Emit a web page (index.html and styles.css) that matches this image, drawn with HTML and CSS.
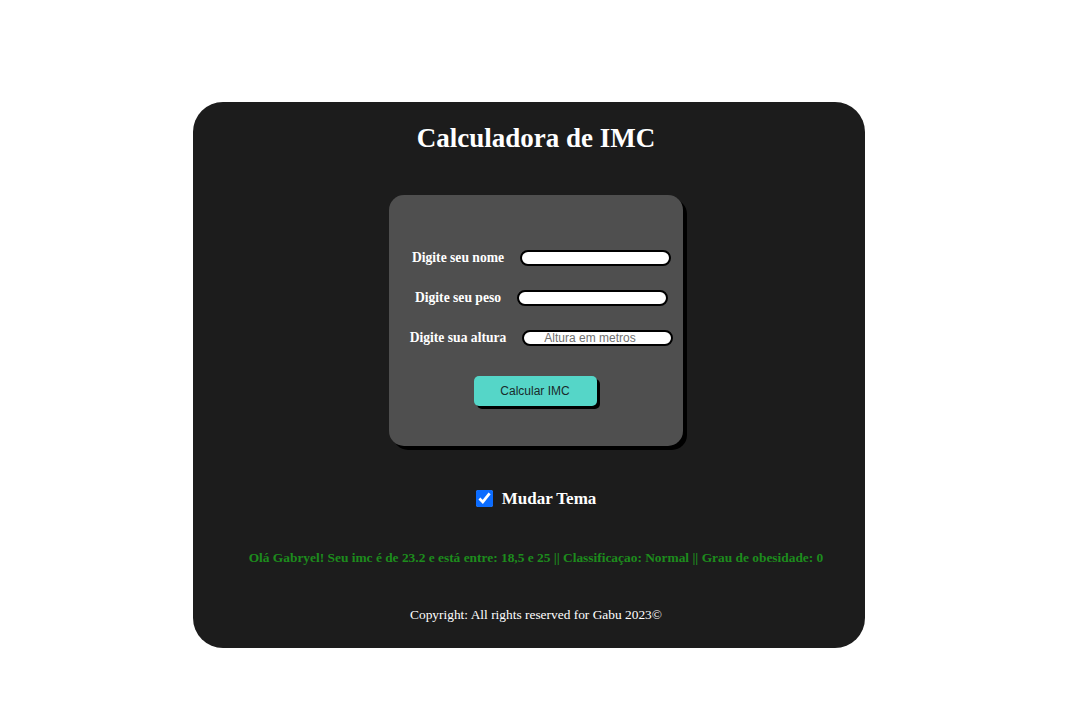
FILE: index.html
```html
<!DOCTYPE html>
<html lang="pt-BR">
<head>
<meta charset="utf-8">
<title>Calculadora de IMC</title>
<link rel="stylesheet" href="styles.css">
</head>
<body>
<main class="app">
  <h1 class="title">Calculadora de IMC</h1>
  <form class="card">
    <div class="row">
      <label class="label" for="nome">Digite seu nome</label>
      <input class="field" id="nome" type="text">
    </div>
    <div class="row">
      <label class="label" for="peso">Digite seu peso</label>
      <input class="field" id="peso" type="text">
    </div>
    <div class="row">
      <label class="label" for="altura">Digite sua altura</label>
      <input class="field" id="altura" type="text" placeholder="Altura em metros">
    </div>
    <button class="btn" type="button">Calcular IMC</button>
  </form>
  <div class="theme">
    <input class="check" id="tema" type="checkbox" checked>
    <label class="theme-label" for="tema">Mudar Tema</label>
  </div>
  <p class="result">Olá Gabryel! Seu imc é de 23.2 e está entre: 18,5 e 25 || Classificaçao: Normal || Grau de obesidade: 0</p>
  <p class="copy">Copyright: All rights reserved for Gabu 2023©</p>
</main>
</body>
</html>
```

FILE: styles.css
```css
html, body {
  margin: 0;
  padding: 0;
  background: #ffffff;
  font-family: "Liberation Serif", "Times New Roman", serif;
}

.app {
  box-sizing: border-box;
  width: 672px;
  height: 546px;
  margin: 102px 0 0 193px;
  padding: 20px 0 0 14px;
  background: #1c1c1c;
  border-radius: 30px;
  display: flex;
  flex-direction: column;
  align-items: center;
  color: #ffffff;
}

.title {
  margin: 0;
  font-size: 27px;
  font-weight: bold;
  line-height: 32px;
}

.card {
  box-sizing: border-box;
  width: 294px;
  height: 251px;
  margin-top: 41px;
  padding-top: 55px;
  background: #4f4f4f;
  border-radius: 15px;
  box-shadow: 4px 4px 0 #000000;
  display: flex;
  flex-direction: column;
  align-items: center;
}

.row {
  display: flex;
  align-items: center;
  gap: 16px;
  height: 16px;
  margin: 0 0 24px 11px;
}

.label {
  font-size: 13.6px;
  font-weight: bold;
  color: #ffffff;
}

.field {
  box-sizing: border-box;
  width: 151px;
  height: 16px;
  margin: 0;
  padding: 0 4px 0 20px;
  border: 2px solid #000000;
  border-radius: 9px;
  background: #ffffff;
  font-family: "Liberation Sans", Arial, sans-serif;
  font-size: 12px;
  text-align: left;
  outline: none;
}

.field::placeholder {
  color: #6e6e6e;
}

.btn {
  width: 123px;
  height: 30px;
  margin: 6px 2px 0 0;
  border: none;
  border-radius: 5px;
  background: #55d6c8;
  box-shadow: 3px 3px 0 #000000;
  color: #1a2b2b;
  font-family: "Liberation Sans", Arial, sans-serif;
  font-size: 12px;
  padding: 0;
}

.theme {
  display: flex;
  align-items: center;
  gap: 9px;
  margin-top: 42px;
}

.check {
  width: 17px;
  height: 17px;
  margin: 0;
  accent-color: #0b6cff;
}

.theme-label {
  font-size: 17px;
  font-weight: bold;
  position: relative;
  top: 1px;
}

.result {
  margin: 42px 0 0;
  font-size: 13.4px;
  font-weight: bold;
  color: #1d8c1d;
}

.copy {
  margin: 41px 0 0;
  font-size: 13.4px;
  color: #ffffff;
}
```
